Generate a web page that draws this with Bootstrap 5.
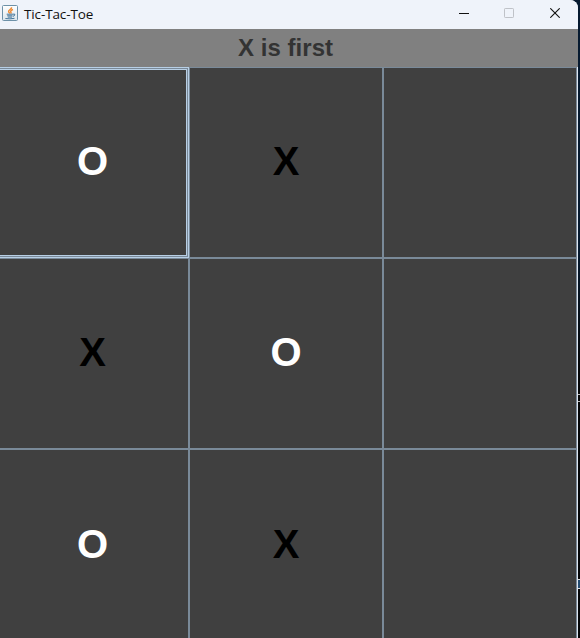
<!DOCTYPE html>
<html lang="en">
<head>
<meta charset="utf-8">
<title>Tic-Tac-Toe</title>
<link href="https://cdn.jsdelivr.net/npm/bootstrap@5.3.0/dist/css/bootstrap.min.css" rel="stylesheet">
<style>
body { width: 580px; height: 638px; background: #030a12; font-family: "Liberation Sans", Arial, sans-serif; }
.desktop-edge { background: linear-gradient(#061a30 0, #061a30 250px, #050709 370px, #050709 100%); }
.game-window { width: 578px; height: 638px; background: #dde4ee; border-radius: 0 8px 0 0; }
.title-bar { height: 29px; background: #eff3fa; padding: 0 0 3px 2px; }
.title-text { font: 13.5px/20px "Open Sans", sans-serif; letter-spacing: -.12px; color: #111; margin: 2px 0 0 6px; }
.window-control { width: 46px; height: 26px; background: none; }
.window-control:first-child { width: 45px; }
.status-bar { height: 38px; background: #808080; color: #333; font-size: 24px; line-height: 38px; padding-right: 7px; letter-spacing: .05px; }
.board { display: grid; grid-template-columns: 190px 194px 193px; grid-template-rows: 192px 191px 188px; width: 577px; height: 571px; }
.square { background: #404040; border: solid #7a8a99; border-width: 0 2px 2px 0; border-radius: 0; font-size: 40px; line-height: 1; padding: 0 0 4px; color: #000; }
.square:nth-child(-n+3) { border-top-width: 1px; }
.square:nth-child(3n) { border-right-width: 1px; }
.square:nth-child(3n+1) { padding-right: 3px; }
.square:nth-child(n+7) { border-bottom-width: 0; padding-bottom: 0; }
.square.focused { border: solid #7a8a99; border-width: 0 1px 1px 0; padding-right: 4px; box-shadow: inset 0 1px #b8cfe5, inset -1px -1px #b8cfe5, inset -2px -2px #7a8a99, inset 0 2px #7a8a99, inset -3px -3px #b8cfe5, inset 0 3px #b8cfe5; }
.mark-o { color: #fff; }
.edge-glyph { left: 578px; width: 2px; overflow: hidden; }
</style>
<script src="https://cdn.jsdelivr.net/npm/bootstrap@5.3.0/dist/js/bootstrap.bundle.min.js"></script>
</head>
<body class="overflow-hidden position-relative desktop-edge">
<main class="game-window overflow-hidden d-flex flex-column">
  <header class="title-bar d-flex align-items-center">
    <svg width="16" height="16" viewBox="0 0 16 16" aria-hidden="true">
      <defs><linearGradient id="tile" x2="0" y2="1"><stop stop-color="#fff"/><stop offset="1" stop-color="#dbe5ec"/></linearGradient></defs>
      <rect x=".5" y=".5" width="15" height="15" rx="1" fill="url(#tile)" stroke="#6d91a8"/>
      <path d="M9.6 2.2C9.8 4.2 6 4.8 6.6 6.8L7.9 8.4M11 4.5C8.7 5.3 8.2 6.2 9 7.2 9.3 7.8 9 8.2 8.6 8.6" fill="none" stroke="#ee8a32" stroke-width="1.4"/>
      <path d="M4.7 9.2H11M5.2 10.8H10.5M5.8 12.1H10M3.4 13.5Q8 14.3 12.5 13.3M11 9.2Q13.3 8.5 12.8 10Q12.4 11 10.8 11.4" fill="none" stroke="#44769b"/>
    </svg>
    <div class="title-text">Tic-Tac-Toe</div>
    <div class="d-flex ms-auto">
      <button class="window-control border-0 p-0 d-flex align-items-center justify-content-center" aria-label="Minimize"><svg width="10" height="10"><path d="M0 5.5H10" stroke="#111"/></svg></button>
      <button class="window-control border-0 p-0 d-flex align-items-center justify-content-center" aria-label="Maximize"><svg width="10" height="10"><rect x=".5" y=".5" width="9" height="9" rx=".7" fill="none" stroke="#bfc2c8"/></svg></button>
      <button class="window-control border-0 p-0 d-flex align-items-center justify-content-center" aria-label="Close"><svg width="10" height="10"><path d="M.3.3 9.7 9.7M9.7.3.3 9.7" stroke="#111" stroke-width="1.1"/></svg></button>
    </div>
  </header>
  <div class="status-bar fw-bold text-center">X is first</div>
  <section class="board">
    <button class="btn square fw-bold mark-o focused">O</button>
    <button class="btn square fw-bold">X</button>
    <button class="btn square" aria-label="Empty square"></button>
    <button class="btn square fw-bold">X</button>
    <button class="btn square fw-bold mark-o">O</button>
    <button class="btn square" aria-label="Empty square"></button>
    <button class="btn square fw-bold mark-o">O</button>
    <button class="btn square fw-bold">X</button>
    <button class="btn square" aria-label="Empty square"></button>
  </section>
</main>
<svg class="position-absolute edge-glyph" style="top:393px" height="10"><path d="M0 1.5H2M0 8.5H2" stroke="#bbb"/></svg>
<svg class="position-absolute edge-glyph" style="top:579px" height="10"><rect width="2" height="10" fill="#234b70"/><path d="M0 .5H2M0 9.5H2" stroke="#ddd"/></svg>
</body>
</html>
